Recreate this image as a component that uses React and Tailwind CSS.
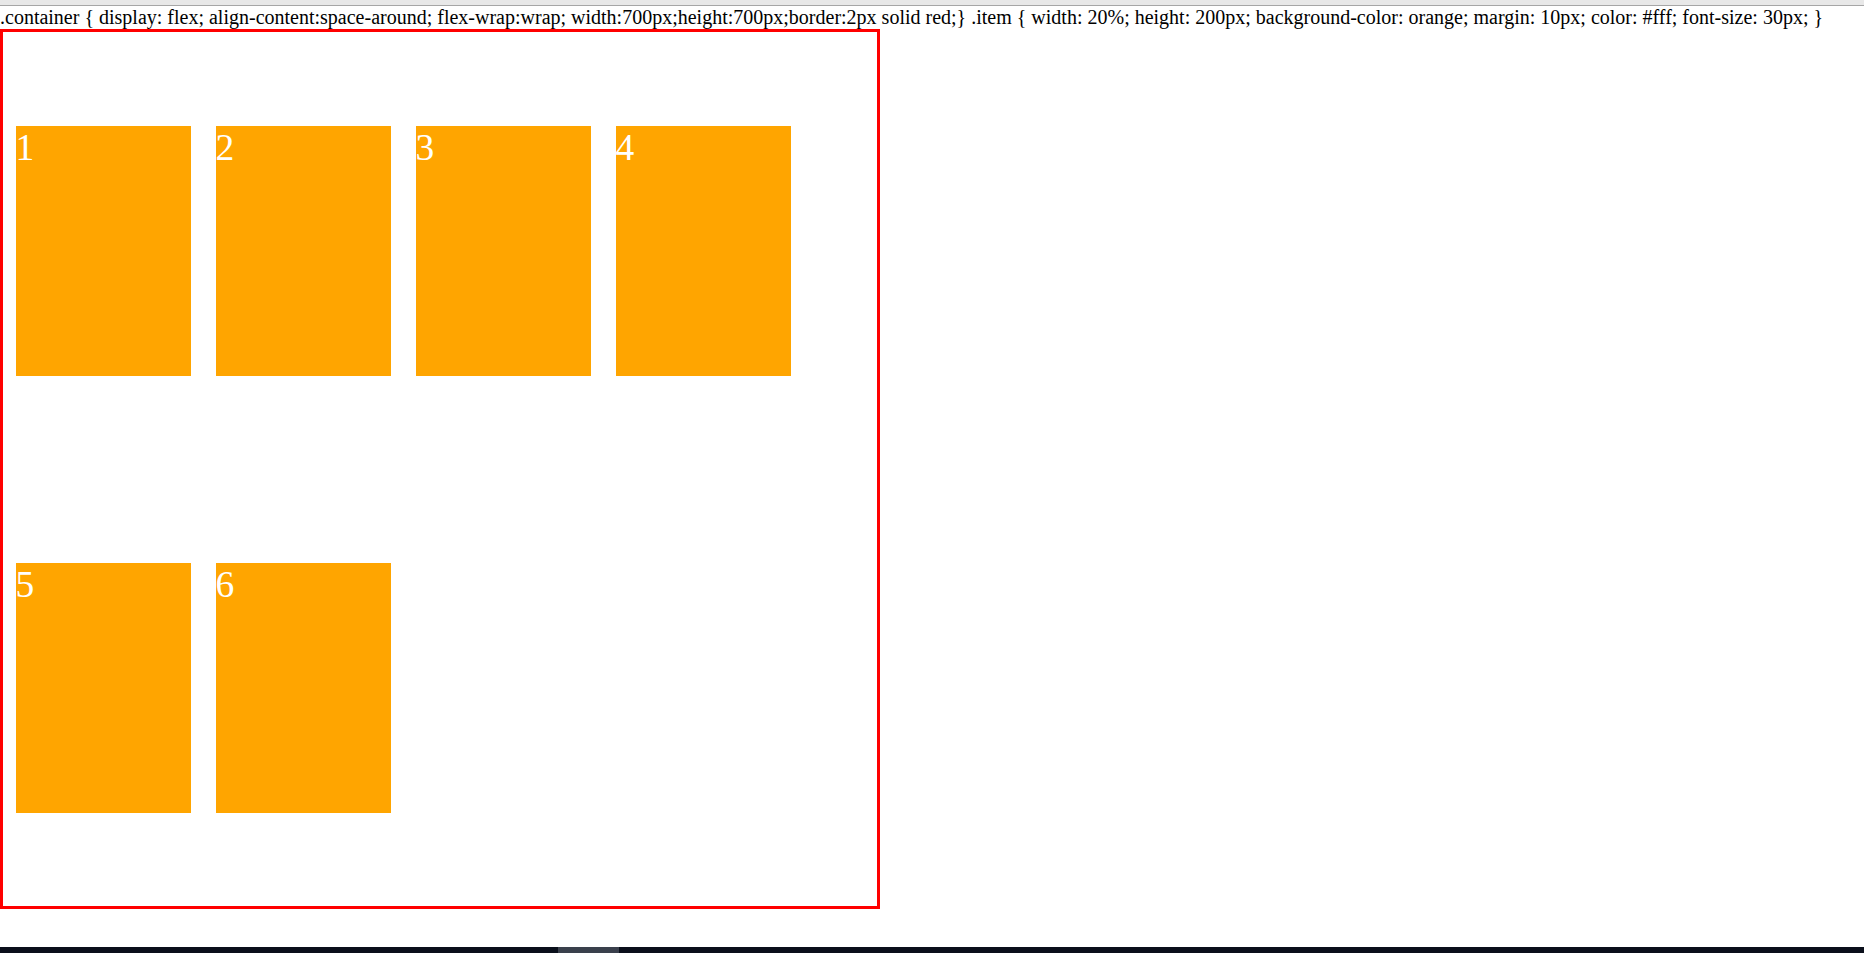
const items = [1, 2, 3, 4, 5, 6];

const App = () => {
  return (
    <div
      className="h-[953px] w-full flex flex-col bg-white overflow-hidden"
      style={{ fontFamily: '"Liberation Serif", "Times New Roman", serif' }}
    >
      <div className="h-[6px] shrink-0 bg-[#e8e8e8] border-b border-[#a6a6a6]" />
      <p className="h-[23px] shrink-0 text-[20px] leading-[23px] text-black whitespace-nowrap">
        .container {"{"} display: flex; align-content:space-around; flex-wrap:wrap; width:700px;height:700px;border:2px solid red;{"}"} .item {"{"} width: 20%; height: 200px; background-color: orange; margin: 10px; color: #fff; font-size: 30px; {"}"}
      </p>
      <div className="w-[880px] h-[880px] shrink-0 border-[3px] border-[#ff0000] flex flex-wrap content-around">
        {items.map((n) => (
          <div
            key={n}
            className="w-[175px] h-[250px] m-[12.5px] bg-[#ffa500] text-white text-[37.5px] leading-[1.15]"
          >
            {n}
          </div>
        ))}
      </div>
      <div className="flex-1" />
      <div className="h-[6px] shrink-0 bg-[#0a0f1b] flex">
        <div className="w-[558px]" />
        <div className="w-[61px] bg-[#3a404c]" />
      </div>
    </div>
  );
};

export default App;
